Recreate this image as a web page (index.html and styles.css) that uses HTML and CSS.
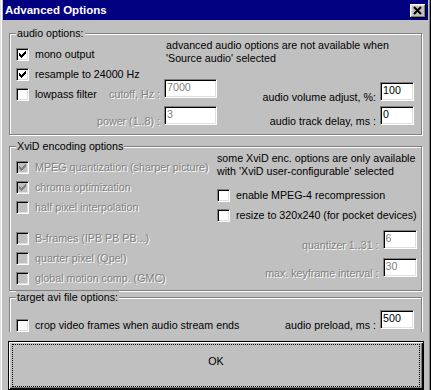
FILE: index.html
```html
<!DOCTYPE html>
<html lang="en">
<head>
    <meta charset="UTF-8">
    <meta name="viewport" content="width=device-width, initial-scale=1.0">
    <title>Advanced Options</title>
    <link rel="stylesheet" href="styles.css">
</head>
<body>
    <div class="window">
        <div class="titlebar">
            <span class="title">Advanced Options</span>
            <span class="close-btn">
                <svg width="16" height="14" viewBox="0 0 16 14"><path d="M4 3 L11 10 M11 3 L4 10" stroke="#000" stroke-width="2"/></svg>
            </span>
        </div>

        <div class="dialog">
            <fieldset class="group group-audio">
                <legend>audio options:</legend>
                <div class="audio-cols">
                    <div class="audio-left">
                        <div class="row">
                            <span class="box"><svg class="tick" width="7" height="7" viewBox="0 0 7 7"><path d="M0 2H1V3H2V4H3V3H4V2H5V1H6V0H7V3H6V4H5V5H4V6H3V7H2V6H1V5H0Z"/></svg></span>
                            <span>mono output</span>
                        </div>
                        <div class="row">
                            <span class="box"><svg class="tick" width="7" height="7" viewBox="0 0 7 7"><path d="M0 2H1V3H2V4H3V3H4V2H5V1H6V0H7V3H6V4H5V5H4V6H3V7H2V6H1V5H0Z"/></svg></span>
                            <span>resample to 24000 Hz</span>
                        </div>
                        <div class="row">
                            <span class="box"></span>
                            <span>lowpass filter</span>
                            <span class="field-label off push">cutoff, Hz :</span>
                            <input class="edit wide" type="text" value="7000" disabled>
                        </div>
                        <div class="row row-end power-row">
                            <span class="field-label off">power (1..8) :</span>
                            <input class="edit wide" type="text" value="3" disabled>
                        </div>
                    </div>
                    <div class="audio-right">
                        <p class="info">advanced audio options are not available when<br>'Source audio' selected</p>
                        <div class="row row-end volume-row">
                            <span class="field-label">audio volume adjust, %:</span>
                            <input class="edit" type="text" value="100">
                        </div>
                        <div class="row row-end delay-row">
                            <span class="field-label">audio track delay, ms :</span>
                            <input class="edit" type="text" value="0">
                        </div>
                    </div>
                </div>
            </fieldset>

            <fieldset class="group group-xvid">
                <legend>XviD encoding options</legend>
                <div class="xvid-cols">
                    <div class="xvid-left">
                        <div class="row off">
                            <span class="box disabled"><svg class="tick" width="7" height="7" viewBox="0 0 7 7"><path d="M0 2H1V3H2V4H3V3H4V2H5V1H6V0H7V3H6V4H5V5H4V6H3V7H2V6H1V5H0Z"/></svg></span>
                            <span>MPEG quantization (sharper picture)</span>
                        </div>
                        <div class="row off">
                            <span class="box disabled"><svg class="tick" width="7" height="7" viewBox="0 0 7 7"><path d="M0 2H1V3H2V4H3V3H4V2H5V1H6V0H7V3H6V4H5V5H4V6H3V7H2V6H1V5H0Z"/></svg></span>
                            <span>chroma optimization</span>
                        </div>
                        <div class="row off">
                            <span class="box disabled"></span>
                            <span>half pixel interpolation</span>
                        </div>
                        <div class="row off bframes-row">
                            <span class="box disabled"></span>
                            <span>B-frames (IPB PB PB...)</span>
                        </div>
                        <div class="row off">
                            <span class="box disabled"></span>
                            <span>quarter pixel (Qpel)</span>
                        </div>
                        <div class="row off">
                            <span class="box disabled"></span>
                            <span>global motion comp. (GMC)</span>
                        </div>
                    </div>
                    <div class="xvid-right">
                        <p class="info">some XviD enc. options are only available<br>with 'XviD user-configurable' selected</p>
                        <div class="row mpeg4-row">
                            <span class="box"></span>
                            <span>enable MPEG-4 recompression</span>
                        </div>
                        <div class="row">
                            <span class="box"></span>
                            <span>resize to 320x240 (for pocket devices)</span>
                        </div>
                        <div class="row row-end quant-row">
                            <span class="field-label off">quantizer 1..31 :</span>
                            <input class="edit" type="text" value="6" disabled>
                        </div>
                        <div class="row row-end key-row">
                            <span class="field-label off">max. keyframe interval :</span>
                            <input class="edit" type="text" value="30" disabled>
                        </div>
                    </div>
                </div>
            </fieldset>

            <fieldset class="group group-avi">
                <legend>target avi file options:</legend>
                <div class="row avi-row">
                    <span class="box"></span>
                    <span>crop video frames when audio stream ends</span>
                    <span class="field-label push">audio preload, ms :</span>
                    <input class="edit" type="text" value="500">
                </div>
            </fieldset>

            <button class="ok-btn"><span class="focus">OK</span></button>
        </div>
    </div>
</body>
</html>
```

FILE: styles.css
```css
* {
    box-sizing: border-box;
}

body {
    margin: 0;
    background: #c0c0c0;
    font-family: "Liberation Sans", Arial, sans-serif;
    font-size: 10.7px;
    line-height: 13px;
    color: #000;
}

.window {
    width: 431px;
    height: 390px;
    padding: 0 3px;
    display: flex;
    flex-direction: column;
    overflow: hidden;
    box-shadow: inset 1px 0 #dfdfdf, inset 2px 0 #fff, inset -1px 0 #000, inset -2px 0 #808080;
}

/* title bar */
.titlebar {
    height: 20px;
    flex-shrink: 0;
    background: #000080;
    display: flex;
    align-items: center;
    justify-content: space-between;
    padding: 0 2px 0 2px;
}

.title {
    color: #fff;
    font-weight: bold;
    font-size: 11.5px;
}

.close-btn {
    display: flex;
    width: 16px;
    height: 14px;
    align-self: flex-end;
    margin-bottom: 2px;
    background: #c0c0c0;
    box-shadow: inset -1px -1px #000, inset 1px 1px #fff, inset -2px -2px #808080, inset 2px 2px #dfdfdf;
}

/* dialog body */
.dialog {
    flex: 1;
    display: flex;
    flex-direction: column;
    padding: 7px 0 0 6px;
}

.group {
    margin: 0;
    padding: 0 7px 0 6px;
    width: 413px;
    min-width: 0;
    border: 1px solid #808080;
    box-shadow: inset 1px 1px #fff, 1px 1px #fff;
}

.group legend {
    padding: 0 1px;
    background: #c0c0c0;
}

.group-audio {
    height: 108px;
}

.group-xvid {
    height: 151px;
    margin-top: 5px;
}

.group-avi {
    height: 41px;
    border-bottom: none;
    box-shadow: inset 1px 1px #fff, 1px 0 #fff;
}

.info {
    margin: -1px 0 0 0;
}

/* rows */
.row {
    display: flex;
    align-items: center;
    height: 20px;
    white-space: nowrap;
}

.row-end {
    justify-content: flex-end;
}

.push {
    margin-left: auto;
}

.field-label {
    margin-right: 4px;
}

.off {
    color: #808080;
    text-shadow: 1px 1px 0 #fff;
}

/* checkbox */
.box {
    display: flex;
    width: 13px;
    height: 13px;
    padding: 2px;
    margin-right: 6px;
    flex-shrink: 0;
    background: #fff;
    border: 1px solid;
    border-color: #808080 #fff #fff #808080;
    box-shadow: inset 1px 1px #000, inset -1px -1px #dfdfdf;
}

.box.disabled {
    background: #c0c0c0;
}

.tick {
    fill: #000;
}

.box.disabled .tick {
    fill: #808080;
}

/* edit fields */
.edit {
    width: 34px;
    height: 19px;
    margin: 0 0 6px 0;
    align-self: flex-end;
    padding: 0 1px 4px 2px;
    font: inherit;
    color: #000;
    background: #fff;
    border: 1px solid;
    border-color: #808080 #fff #fff #808080;
    box-shadow: inset 1px 1px #000, inset -1px -1px #dfdfdf;
    outline: none;
    text-shadow: none;
}

.edit.wide {
    width: 53px;
}

input.edit:disabled {
    color: #808080;
    background: #fff;
}

/* audio group */
.audio-cols {
    display: grid;
    grid-template-columns: 150px 51px 1fr;
}

.audio-left {
    grid-column: 1 / 3;
    grid-row: 1;
    padding-top: 4px;
}

.audio-right {
    grid-column: 2 / 4;
    grid-row: 1;
}

.power-row {
    margin-top: 7px;
}

.volume-row {
    margin-top: 22px;
}

.delay-row {
    margin-top: 4px;
}

/* xvid group */
.xvid-cols {
    display: grid;
    grid-template-columns: 201px 1fr;
}

.xvid-left {
    padding-top: 4px;
}

.bframes-row {
    margin-top: 11px;
}

.mpeg4-row {
    margin-top: 7px;
}

.quant-row {
    margin-top: 10px;
}

.key-row {
    margin-top: 8px;
}

/* avi group */
.avi-row {
    margin-top: 11px;
}

/* OK button */
.ok-btn {
    display: block;
    width: 416px;
    height: 49px;
    margin: 9px 0 0 -1px;
    padding: 2px 3px;
    font: inherit;
    color: #000;
    background: #c0c0c0;
    border: 1px solid #000;
    box-shadow: inset 1px 1px #fff, inset -1px -1px #000, inset -2px -2px #808080;
}

.focus {
    display: flex;
    height: 100%;
    align-items: center;
    justify-content: center;
    padding-bottom: 9px;
    border: 1px dotted #000;
}
```
